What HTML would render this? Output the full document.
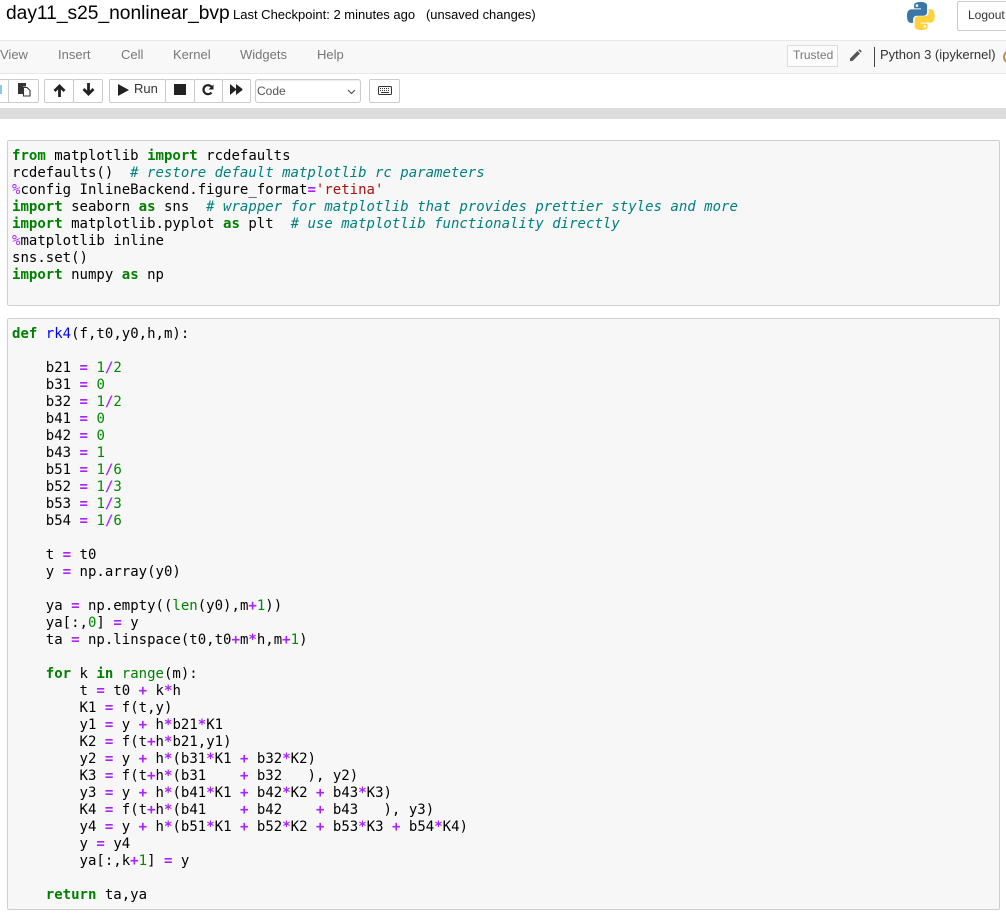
<!DOCTYPE html>
<html><head><meta charset="utf-8">
<style>
html,body{margin:0;padding:0;background:#fff;width:1006px;height:914px;overflow:hidden;position:relative;font-family:"Liberation Sans",sans-serif;color:#000}
.a{position:absolute;white-space:pre}
.btn{position:absolute;top:79px;height:22px;border:1px solid #ccc;background:#fff;box-sizing:content-box;border-radius:2px}
.menu{position:absolute;top:47px;font-size:13px;line-height:16px;color:#777;white-space:pre}
.cell{position:absolute;left:7px;width:991px;background:#f7f7f7;border:1px solid #cfcfcf;border-radius:2px}
pre{position:absolute;left:12px;margin:0;font-family:"DejaVu Sans Mono",monospace;font-size:14px;line-height:17px;color:#000;letter-spacing:.012px}
.k{color:#008000;font-weight:bold}.c{color:#008080;font-style:italic}.o{color:#aa22ff;font-weight:bold}.m{color:#aa22ff}
.n{color:#080}.s{color:#a11}.d{color:#00f}.b{color:#008000}
svg{position:absolute;display:block}
</style></head><body>
<div class="a" style="left:6px;top:1px;font-size:19.2px;line-height:26px;color:#000">day11_s25_nonlinear_bvp</div>
<div class="a" style="left:233px;top:7px;font-size:13px;line-height:16px;color:#000">Last Checkpoint: 2 minutes ago</div>
<div class="a" style="left:426px;top:7px;font-size:12.900px;line-height:16px;color:#000">(unsaved changes)</div>
<svg style="left:907px;top:2px" width="28" height="28" viewBox="0 0 110 110">
<path fill="#3a76a8" d="M54 0C26 0 28 12 28 12v13h27v4H17S0 27 0 55s15 27 15 27h9V69s-.5-15 15-15h26s14 .2 14-14V15S81 0 54 0zM39 9a5 5 0 1 1 0 10 5 5 0 0 1 0-10z"/>
<path fill="#fdd23e" d="M55 110c28 0 26-12 26-12V85H54v-4h38s17 2 17-26-15-27-15-27h-9v13s.5 15-15 15H44s-14-.2-14 14v25s-2 15 25 15zm15-9a5 5 0 1 1 0-10 5 5 0 0 1 0 10z"/>
</svg>
<div style="position:absolute;left:957px;top:1px;width:60px;height:28px;border:1px solid #ccc;border-radius:2px;background:#fff"></div>
<div class="a" style="left:968px;top:7px;font-size:12px;line-height:16px;color:#333">Logout</div>

<div style="position:absolute;left:0;top:40px;width:1006px;height:32px;background:#f8f8f8;border-top:1px solid #e7e7e7;border-bottom:1px solid #e7e7e7"></div>
<div class="menu" style="left:0">View</div>
<div class="menu" style="left:58px">Insert</div>
<div class="menu" style="left:121px">Cell</div>
<div class="menu" style="left:173px">Kernel</div>
<div class="menu" style="left:240px">Widgets</div>
<div class="menu" style="left:317px">Help</div>
<div style="position:absolute;left:787px;top:45px;width:49px;height:20px;border:1px solid #ddd;background:#fcfcfc"></div>
<div class="a" style="left:793px;top:47px;font-size:12px;line-height:16px;color:#777">Trusted</div>
<svg style="left:849px;top:49px" width="13" height="13" viewBox="0 0 13 13"><path fill="#555" d="M1 9.500 8.500 2l2.500 2.500L3.500 12H1zM9.300 1.300l.7-.6c.4-.3.8-.3 1.100 0l1.200 1.200c.3.300.3.700 0 1l-.6.7z"/></svg>
<div style="position:absolute;left:874px;top:47px;width:1px;height:20px;background:#444"></div>
<div class="a" style="left:880px;top:47px;font-size:13px;line-height:16px;color:#333">Python 3 (ipykernel)</div>
<div style="position:absolute;left:1003px;top:51px;width:6px;height:8px;border:2px solid #b98a4a;border-radius:50%"></div>

<!-- toolbar -->
<div class="btn" style="left:-20px;width:28px"></div>
<div style="position:absolute;left:0;top:85px;width:2px;height:9px;background:#8cc8ee"></div>
<div class="btn" style="left:8px;width:29px"></div>
<svg style="left:17px;top:82px" width="14" height="15" viewBox="0 0 14 15"><path fill="#333" d="M1 1h8v3.500H6v7.500H1z"/><path fill="#fff" stroke="#333" stroke-width="1.100" d="M6.500 5.500h3.500l3 3v5.500H6.500z"/></svg>
<div class="btn" style="left:44px;width:28px"></div>
<div class="btn" style="left:73px;width:28px"></div>
<svg style="left:53px;top:84px" width="13" height="13" viewBox="0 0 13 13"><path fill="none" stroke="#222" stroke-width="2.800" d="M1.500 7 6.500 2l5 5M6.500 2.500V13"/></svg>
<svg style="left:82px;top:83px" width="13" height="13" viewBox="0 0 13 13"><path fill="none" stroke="#222" stroke-width="2.800" d="M1.500 6l5 5 5-5M6.500 0v11"/></svg>
<div class="btn" style="left:109px;width:55px"></div>
<svg style="left:118px;top:84px" width="12" height="12" viewBox="0 0 12 12"><path fill="#222" d="M0 0v12l11-6z"/></svg>
<div class="a" style="left:134px;top:81px;font-size:13px;line-height:16px;color:#333">Run</div>
<div class="btn" style="left:165px;width:28px"></div>
<div style="position:absolute;left:174px;top:84px;width:12px;height:11px;background:#222"></div>
<div class="btn" style="left:194px;width:27px"></div>
<svg style="left:201px;top:83px" width="14" height="14" viewBox="0 0 14 14"><path fill="none" stroke="#222" stroke-width="2.200" d="M10.500 9.500A4.500 4.500 0 1 1 10.800 4.300"/><path fill="#222" d="M12.500 1.500v5h-5z"/></svg>
<div class="btn" style="left:222px;width:27px"></div>
<svg style="left:230px;top:84px" width="13" height="11" viewBox="0 0 13 11"><path fill="#222" d="M0 0l6 5V0l6.500 5v1L6 11V6l-6 5z"/></svg>
<div class="btn" style="left:255px;width:104px;border-radius:3px;box-shadow:inset 0 1px 1px rgba(0,0,0,.075)"></div>
<div class="a" style="left:257px;top:84px;font-size:12px;line-height:15px;color:#555">Code</div>
<svg style="left:347px;top:89px" width="9" height="6" viewBox="0 0 9 6"><path fill="none" stroke="#555" stroke-width="1.200" d="M1 1l3.500 3.500L8 1"/></svg>
<div class="btn" style="left:369px;width:29px"></div>
<svg style="left:378px;top:86px" width="14" height="9" viewBox="0 0 14 9"><rect x=".5" y=".5" width="13" height="8" rx="1" fill="none" stroke="#333"/><path stroke="#333" stroke-width="1" stroke-dasharray="1 1" d="M2 2.500h10M2 4.500h10"/><path stroke="#333" d="M3 6.500h8"/></svg>

<div style="position:absolute;left:0;top:108px;width:1006px;height:11px;background:#ddd"></div>

<div class="cell" style="top:140px;height:164px"></div>
<pre style="top:148px"><span class="k">from</span> matplotlib <span class="k">import</span> rcdefaults
rcdefaults()  <span class="c"># restore default matplotlib rc parameters</span>
<span class="m">%</span>config InlineBackend.figure_format<span class="o">=</span><span class="s">'retina'</span>
<span class="k">import</span> seaborn <span class="k">as</span> sns  <span class="c"># wrapper for matplotlib that provides prettier styles and more</span>
<span class="k">import</span> matplotlib.pyplot <span class="k">as</span> plt  <span class="c"># use matplotlib functionality directly</span>
<span class="m">%</span>matplotlib inline
sns.set()
<span class="k">import</span> numpy <span class="k">as</span> np</pre>

<div class="cell" style="top:318px;height:590px"></div>
<pre style="top:326px"><span class="k">def</span> <span class="d">rk4</span>(f,t0,y0,h,m):

    b21 <span class="o">=</span> <span class="n">1</span><span class="o">/</span><span class="n">2</span>
    b31 <span class="o">=</span> <span class="n">0</span>
    b32 <span class="o">=</span> <span class="n">1</span><span class="o">/</span><span class="n">2</span>
    b41 <span class="o">=</span> <span class="n">0</span>
    b42 <span class="o">=</span> <span class="n">0</span>
    b43 <span class="o">=</span> <span class="n">1</span>
    b51 <span class="o">=</span> <span class="n">1</span><span class="o">/</span><span class="n">6</span>
    b52 <span class="o">=</span> <span class="n">1</span><span class="o">/</span><span class="n">3</span>
    b53 <span class="o">=</span> <span class="n">1</span><span class="o">/</span><span class="n">3</span>
    b54 <span class="o">=</span> <span class="n">1</span><span class="o">/</span><span class="n">6</span>

    t <span class="o">=</span> t0
    y <span class="o">=</span> np.array(y0)

    ya <span class="o">=</span> np.empty((<span class="b">len</span>(y0),m<span class="o">+</span><span class="n">1</span>))
    ya[:,<span class="n">0</span>] <span class="o">=</span> y
    ta <span class="o">=</span> np.linspace(t0,t0<span class="o">+</span>m<span class="o">*</span>h,m<span class="o">+</span><span class="n">1</span>)

    <span class="k">for</span> k <span class="k">in</span> <span class="b">range</span>(m):
        t <span class="o">=</span> t0 <span class="o">+</span> k<span class="o">*</span>h
        K1 <span class="o">=</span> f(t,y)
        y1 <span class="o">=</span> y <span class="o">+</span> h<span class="o">*</span>b21<span class="o">*</span>K1
        K2 <span class="o">=</span> f(t<span class="o">+</span>h<span class="o">*</span>b21,y1)
        y2 <span class="o">=</span> y <span class="o">+</span> h<span class="o">*</span>(b31<span class="o">*</span>K1 <span class="o">+</span> b32<span class="o">*</span>K2)
        K3 <span class="o">=</span> f(t<span class="o">+</span>h<span class="o">*</span>(b31    <span class="o">+</span> b32   ), y2)
        y3 <span class="o">=</span> y <span class="o">+</span> h<span class="o">*</span>(b41<span class="o">*</span>K1 <span class="o">+</span> b42<span class="o">*</span>K2 <span class="o">+</span> b43<span class="o">*</span>K3)
        K4 <span class="o">=</span> f(t<span class="o">+</span>h<span class="o">*</span>(b41    <span class="o">+</span> b42    <span class="o">+</span> b43   ), y3)
        y4 <span class="o">=</span> y <span class="o">+</span> h<span class="o">*</span>(b51<span class="o">*</span>K1 <span class="o">+</span> b52<span class="o">*</span>K2 <span class="o">+</span> b53<span class="o">*</span>K3 <span class="o">+</span> b54<span class="o">*</span>K4)
        y <span class="o">=</span> y4
        ya[:,k<span class="o">+</span><span class="n">1</span>] <span class="o">=</span> y

    <span class="k">return</span> ta,ya</pre>
</body></html>
